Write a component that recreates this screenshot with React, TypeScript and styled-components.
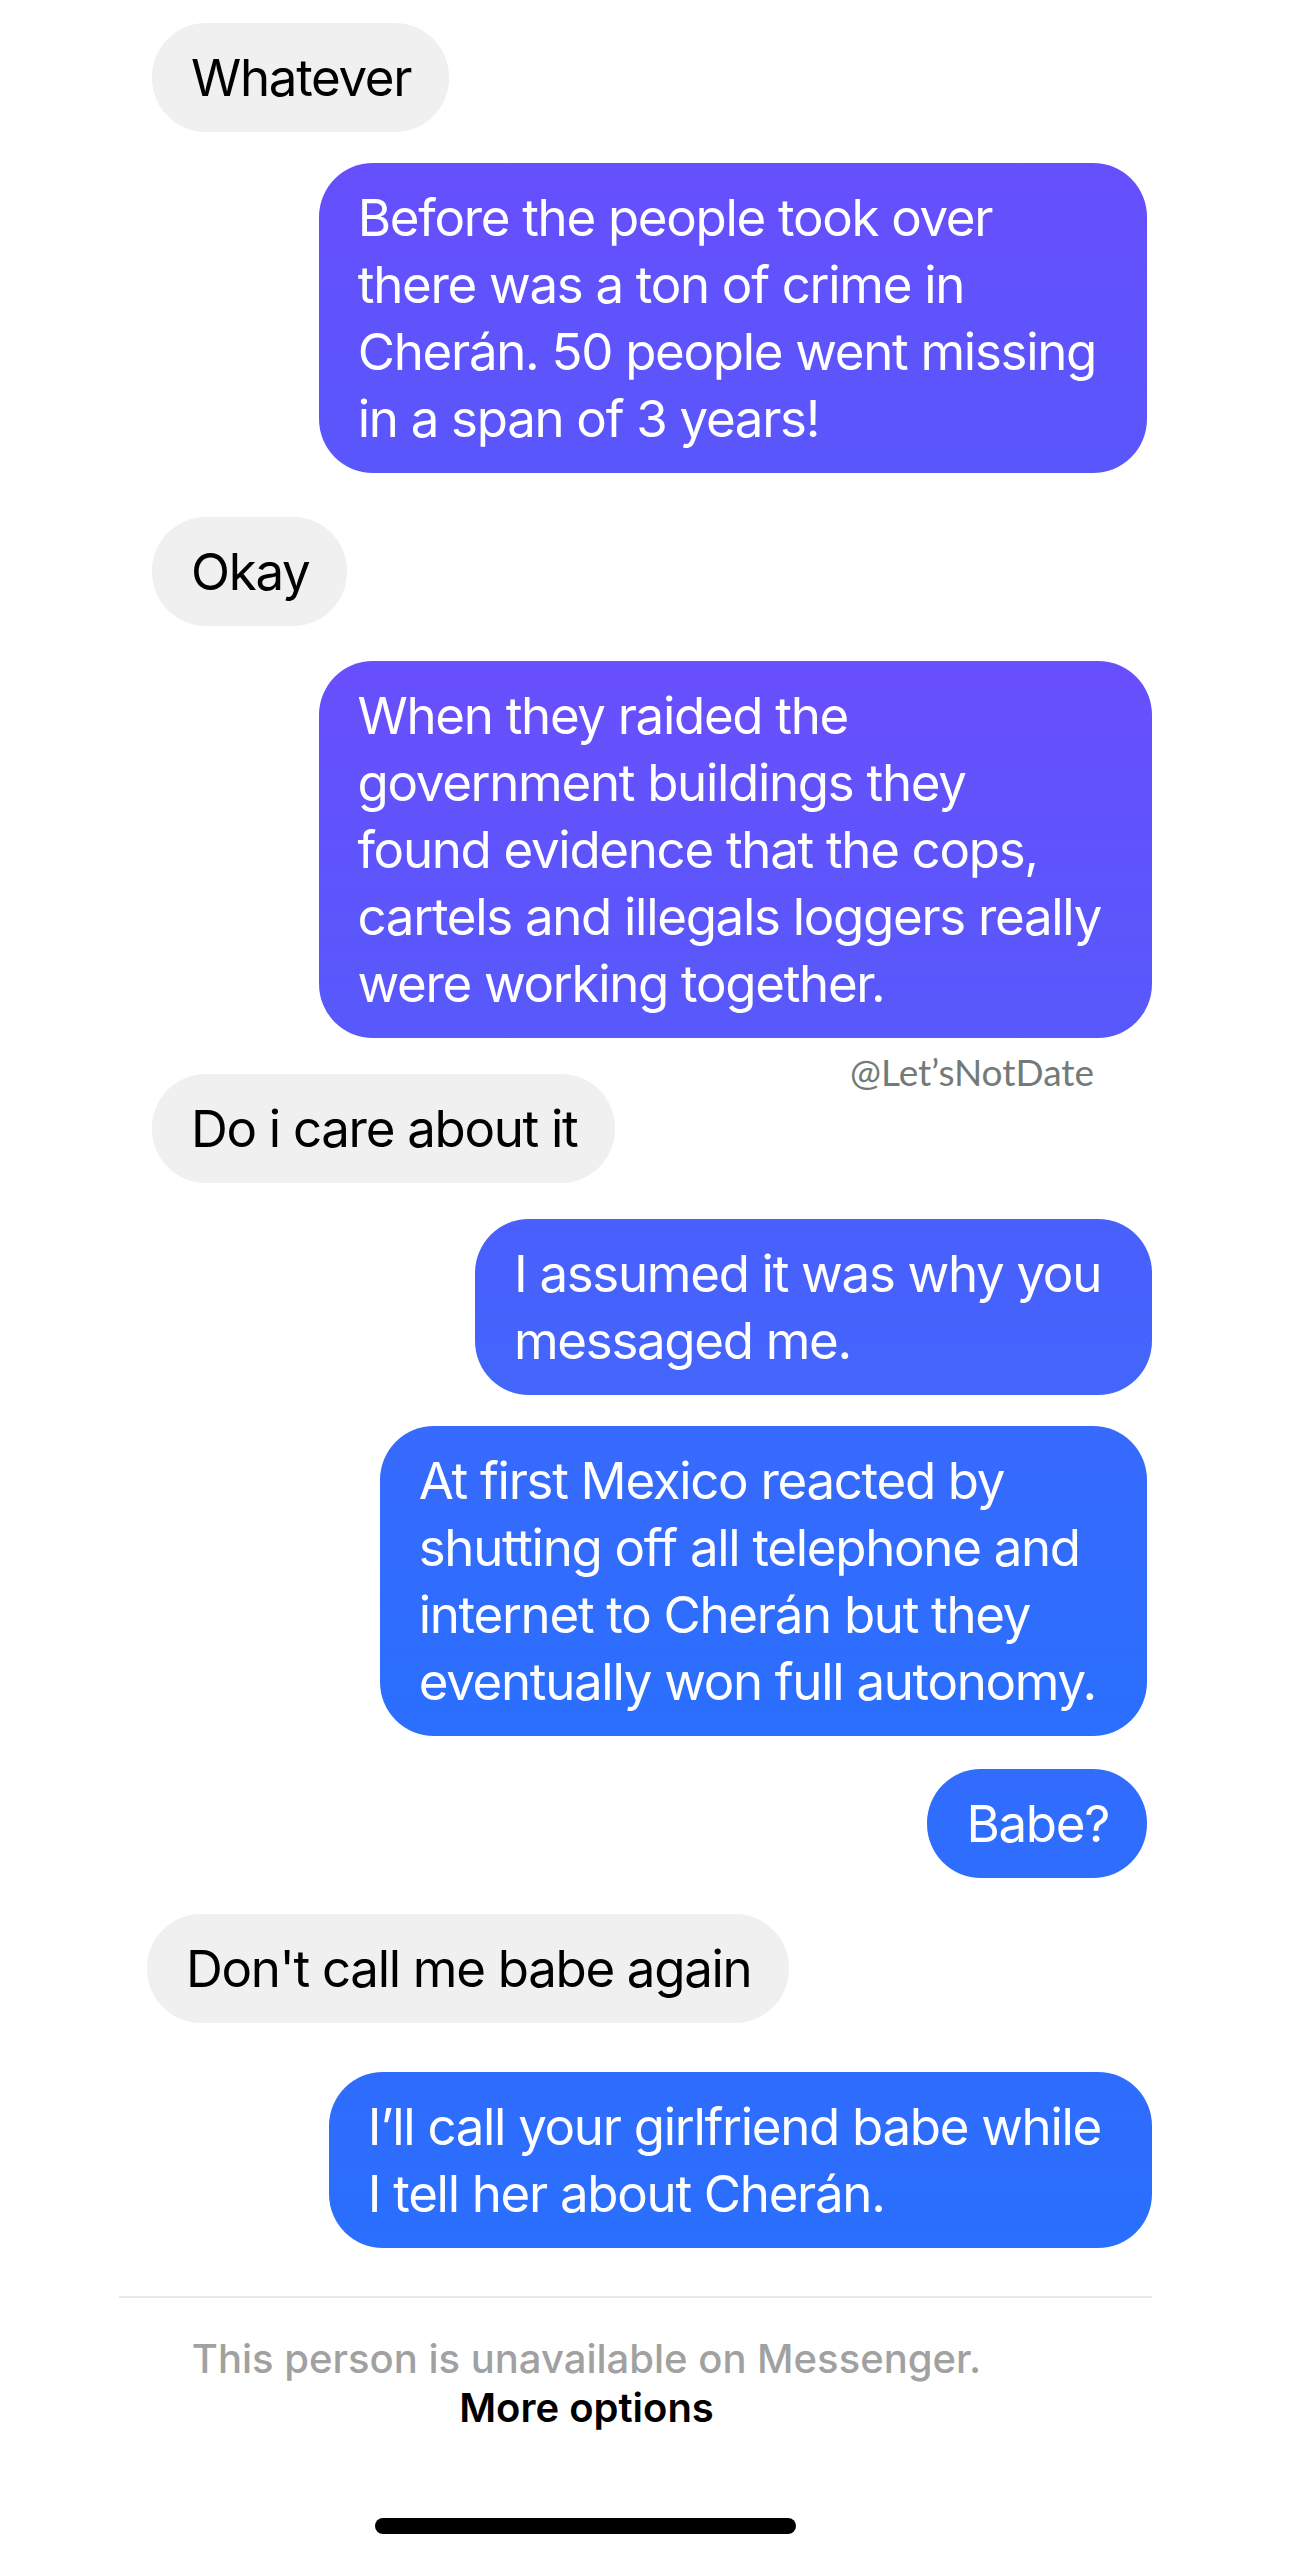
import React from "react";
import styled, { createGlobalStyle } from "styled-components";

const GlobalStyle = createGlobalStyle`
  html, body {
    margin: 0;
    padding: 0;
    background: #ffffff;
  }
  body {
    font-family: Inter, "Noto Sans", sans-serif;
    -webkit-font-smoothing: antialiased;
  }
`;

const Screen = styled.div`
  width: 1289px;
  height: 2558px;
  background: #ffffff;
  display: flex;
  flex-direction: column;
  overflow: hidden;
`;

const Thread = styled.div`
  display: flex;
  flex-direction: column;
  padding: 23px 137px 0 152px;
`;

const Row = styled.div<{ $mine?: boolean; $gap: number; $nudge?: number }>`
  position: relative;
  display: flex;
  justify-content: ${(p) => (p.$mine ? "flex-end" : "flex-start")};
  margin-top: ${(p) => p.$gap}px;
  ${(p) =>
    p.$nudge
      ? p.$mine
        ? `margin-right: ${p.$nudge}px;`
        : `margin-left: ${p.$nudge}px;`
      : ""}
`;

// wrapped sent bubbles keep the slack of their max width on the right
const Bubble = styled.div<{ $from?: string; $to?: string; $wrapped?: boolean }>`
  padding: 21px ${(p) => (p.$wrapped ? 51 : 38)}px 21px 39px;
  border-radius: 54px;
  font-size: 51px;
  line-height: 67px;
  letter-spacing: -1.3px;
  white-space: pre-line;
  color: ${(p) => (p.$from ? "#ffffff" : "#000000")};
  background: ${(p) =>
    p.$from ? `linear-gradient(180deg, ${p.$from}, ${p.$to})` : "#f0f0f0"};
`;

const Watermark = styled.span`
  position: absolute;
  top: -25px;
  right: 58px;
  font-family: Lato, "Open Sans", sans-serif;
  font-size: 37px;
  color: #737b79;
`;

const Footer = styled.div`
  display: flex;
  flex-direction: column;
  padding: 0 137px 0 119px;
`;

const Divider = styled.div`
  height: 2px;
  background: #e8e8e8;
  margin-top: 48px;
`;

const Notice = styled.div`
  margin-top: 36px;
  padding-right: 98px;
  text-align: center;
  font-size: 40px;
  line-height: 49px;
  letter-spacing: 0;
`;

const Muted = styled.div`
  color: #a1a1a1;
  font-weight: 500;
`;

const Action = styled.div`
  color: #000000;
  font-weight: 600;
`;

const HomeBar = styled.div`
  width: 421px;
  height: 16px;
  border-radius: 8px;
  background: #000000;
  margin: 86px 0 0 375px;
`;

type Msg = {
  text: string;
  mine?: boolean;
  gap: number;
  nudge?: number;
  from?: string;
  to?: string;
  mark?: boolean;
};

const messages: Msg[] = [
  { text: "Whatever", gap: 0 },
  {
    text: "Before the people took over\nthere was a ton of crime in\nCherán. 50 people went missing\nin a span of 3 years!",
    mine: true,
    gap: 31,
    nudge: 5,
    from: "#664ffd",
    to: "#5957fb",
  },
  { text: "Okay", gap: 44 },
  {
    text: "When they raided the\ngovernment buildings they\nfound evidence that the cops,\ncartels and illegals loggers really\nwere working together.",
    mine: true,
    gap: 35,
    from: "#684ffd",
    to: "#5759fb",
  },
  { text: "Do i care about it", gap: 36, mark: true },
  {
    text: "I assumed it was why you\nmessaged me.",
    mine: true,
    gap: 36,
    from: "#4a5ffc",
    to: "#4366fc",
  },
  {
    text: "At first Mexico reacted by\nshutting off all telephone and\ninternet to Cherán but they\neventually won full autonomy.",
    mine: true,
    gap: 31,
    nudge: 5,
    from: "#376afd",
    to: "#2a6ffd",
  },
  {
    text: "Babe?",
    mine: true,
    gap: 33,
    nudge: 5,
    from: "#326cfd",
    to: "#2d6efd",
  },
  { text: "Don't call me babe again", gap: 36, nudge: -5 },
  {
    text: "I’ll call your girlfriend babe while\nI tell her about Cherán.",
    mine: true,
    gap: 49,
    from: "#2f6cfd",
    to: "#2a6ffd",
  },
];

export default function App() {
  return (
    <>
      <GlobalStyle />
      <Screen>
        <Thread>
          {messages.map((m, i) => (
            <Row key={i} $mine={m.mine} $gap={m.gap} $nudge={m.nudge}>
              {m.mark && <Watermark>@Let’sNotDate</Watermark>}
              <Bubble
                $from={m.from}
                $to={m.to}
                $wrapped={m.mine && m.text.includes("\n")}
              >
                {m.text}
              </Bubble>
            </Row>
          ))}
        </Thread>
        <Footer>
          <Divider />
          <Notice>
            <Muted>This person is unavailable on Messenger.</Muted>
            <Action>More options</Action>
          </Notice>
        </Footer>
        <HomeBar />
      </Screen>
    </>
  );
}
